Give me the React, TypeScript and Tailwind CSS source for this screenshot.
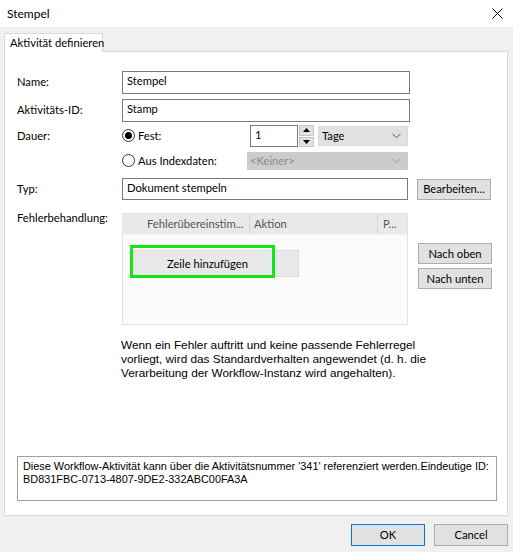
import React from "react";

const ui = "font-['Lato','Noto_Sans',sans-serif]";
const tah = "font-['Liberation_Sans','Noto_Sans',sans-serif]";

function Radio({ checked }: { checked?: boolean }) {
  return (
    <span className="w-[13px] h-[13px] rounded-full border border-[#333333] bg-white flex items-center justify-center shrink-0">
      {checked && <span className="w-[7px] h-[7px] rounded-full bg-[#000000]" />}
    </span>
  );
}

function Chevron({ color = "#555" }: { color?: string }) {
  return (
    <svg width="9" height="6" viewBox="0 0 9 6">
      <path d="M0.5 0.8 L4.5 4.8 L8.5 0.8" fill="none" stroke={color} strokeWidth="1" />
    </svg>
  );
}

export default function App() {
  return (
    <div className={`w-[513px] h-[552px] bg-[#f0f0f0] text-[11.2px] text-black overflow-hidden flex flex-col whitespace-nowrap ${ui}`}>
      {/* Title bar */}
      <div className="h-[27px] bg-white flex items-center justify-between pl-[7px] pr-[10px] shrink-0">
        <span className="text-[12px] leading-none">Stempel</span>
        <svg width="11" height="11" viewBox="0 0 11 11">
          <path d="M0.5 0.5 L10.5 10.5 M10.5 0.5 L0.5 10.5" stroke="#000" strokeWidth="1" />
        </svg>
      </div>

      {/* Tab area */}
      <div className="pl-[4px] pt-[6px] flex flex-col">
        <div className="flex">
          <div className="h-[19px] w-[99px] bg-white border-l border-t border-r border-[#d9d9d9] -mb-px relative z-10 pl-[5px] flex items-center leading-none">
            Aktivität definieren
          </div>
        </div>
        <div className="w-[504px] h-[465px] bg-white border border-[#d9d9d9] flex flex-col pl-[12px] pt-[19px]">
          {/* Name */}
          <div className="flex items-center h-[23px]">
            <div className="w-[105px]">Name:</div>
            <div className="w-[288px] h-[23px] border border-[#7a7a7a] px-[4px] leading-[18px]">Stempel</div>
          </div>
          {/* ID */}
          <div className="flex items-center h-[23px] mt-[5px]">
            <div className="w-[105px]">Aktivitäts-ID:</div>
            <div className="w-[288px] h-[23px] border border-[#7a7a7a] px-[4px] leading-[18px]">Stamp</div>
          </div>
          {/* Dauer */}
          <div className="flex items-center h-[22px] mt-[3px]">
            <div className="w-[105px]">Dauer:</div>
            <div className="w-[128px] flex items-center gap-[3px]">
              <Radio checked />
              <span>Fest:</span>
            </div>
            <div className="w-[48px] h-[22px] border border-[#7a7a7a] px-[4px] leading-[18px] bg-white">1</div>
            <div className="ml-[1px] w-[15px] h-[22px] flex flex-col gap-px">
              <div className="flex-1 bg-[#e1e1e1] border border-[#c4c4c4] flex items-center justify-center">
                <svg width="7" height="4" viewBox="0 0 7 4"><path d="M0 4 L3.5 0 L7 4 Z" fill="#000" /></svg>
              </div>
              <div className="flex-1 bg-[#e1e1e1] border border-[#c4c4c4] flex items-center justify-center">
                <svg width="7" height="4" viewBox="0 0 7 4"><path d="M0 0 L3.5 4 L7 0 Z" fill="#000" /></svg>
              </div>
            </div>
            <div className="ml-[4px] w-[90px] h-[20px] bg-[#e1e1e1] border border-[#dadada] flex items-center justify-between pl-[3px] pr-[6px]">
              <span className="leading-none">Tage</span>
              <Chevron />
            </div>
          </div>
          {/* Aus Indexdaten */}
          <div className="flex items-center h-[18px] mt-[5px]">
            <div className="w-[105px]" />
            <div className="w-[125px] flex items-center gap-[3px]">
              <Radio />
              <span>Aus Indexdaten:</span>
            </div>
            <div className="w-[161px] h-[18px] bg-[#cccccc] flex items-center justify-between pl-[3px] pr-[7px] text-[#8a8a8a]">
              <span className="leading-none">&lt;Keiner&gt;</span>
              <Chevron color="#9a9a9a" />
            </div>
          </div>
          {/* Typ */}
          <div className="flex items-center h-[22px] mt-[8px]">
            <div className="w-[105px]">Typ:</div>
            <div className="w-[286px] h-[22px] border border-[#7a7a7a] px-[4px] leading-[18px]">Dokument stempeln</div>
            <div className="ml-[9px] w-[74px] h-[21px] bg-[#e1e1e1] border border-[#adadad] flex items-center justify-center leading-none">
              Bearbeiten...
            </div>
          </div>
          {/* Fehlerbehandlung */}
          <div className="flex items-start mt-[13px]">
            <div className="w-[105px] -mt-[3px] leading-[16px]">Fehlerbehandlung:</div>
            <div className="w-[286px] h-[112px] border border-[#e3e3e3] bg-[#fbfbfb] flex flex-col">
              <div className="h-[21px] bg-[#e9e9e9] border-b border-[#f4f4f4] flex items-center text-[#555555] leading-none">
                <div className="w-[24px] shrink-0" />
                <div className="w-[103px] shrink-0 h-full flex items-center border-r border-[#d6d6d6] overflow-hidden">Fehlerübereinstim...</div>
                <div className="w-[128px] shrink-0 h-full flex items-center border-r border-[#d6d6d6] pl-[4px]">Aktion</div>
                <div className="flex-1 h-full flex items-center pl-[5px]">P...</div>
              </div>
              <div className="relative mt-[14px] ml-[7px] w-[169px] h-[28px]">
                <div className="w-[169px] h-[27px] mt-[1px] bg-[#e8e8e8] border border-[#dadada] flex items-center pl-[36px] leading-none">
                  Zeile hinzufügen
                </div>
                <div className="absolute left-0 -top-[4px] w-[145px] h-[33px] border-[3px] border-[#14e614]" />
              </div>
            </div>
            <div className="ml-[10px] mt-[30px] flex flex-col gap-[4px]">
              <div className="w-[74px] h-[21px] bg-[#e1e1e1] border border-[#adadad] flex items-center justify-center leading-none">Nach oben</div>
              <div className="w-[74px] h-[21px] bg-[#e1e1e1] border border-[#adadad] flex items-center justify-center leading-none">Nach unten</div>
            </div>
          </div>
          {/* Explanation */}
          <div className={`ml-[104px] mt-[13px] text-[11.8px] leading-[14px] ${tah}`}>
            Wenn ein Fehler auftritt und keine passende Fehlerregel
            <br />
            vorliegt, wird das Standardverhalten angewendet (d. h. die
            <br />
            Verarbeitung der Workflow-Instanz wird angehalten).
          </div>
          {/* Info box */}
          <div className={`mt-auto mb-[14px] w-[480px] h-[45px] border border-[#a0a0a0] px-[5px] pt-[3px] text-[10.9px] leading-[13px] ${tah}`}>
            Diese Workflow-Aktivität kann über die Aktivitätsnummer '341' referenziert werden.Eindeutige ID:
            <br />
            BD831FBC-0713-4807-9DE2-332ABC00FA3A
          </div>
        </div>
      </div>

      {/* Footer */}
      <div className="flex justify-end gap-[9px] pr-[5px] pt-[8px]">
        <div className="w-[74px] h-[22px] bg-[#e1e1e1] border border-[#0078d7] flex items-center justify-center leading-none">OK</div>
        <div className="w-[74px] h-[22px] bg-[#e1e1e1] border border-[#adadad] flex items-center justify-center leading-none">Cancel</div>
      </div>
    </div>
  );
}
